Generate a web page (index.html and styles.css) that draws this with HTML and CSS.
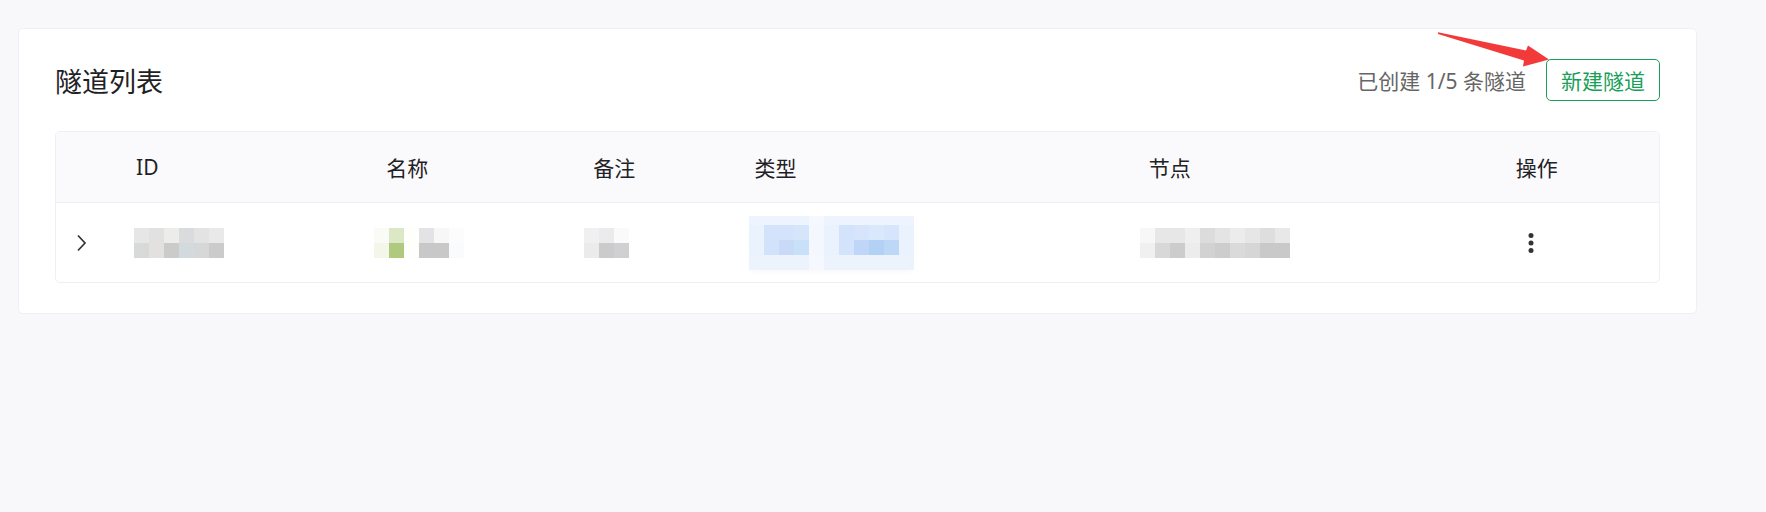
FILE: index.html
```html
<!DOCTYPE html>
<html lang="zh-CN">
<head>
    <meta charset="UTF-8">
    <meta name="viewport" content="width=device-width, initial-scale=1.0">
    <title>隧道列表</title>
    <link rel="stylesheet" href="styles.css">
</head>
<body>
    <div class="card">
        <div class="card-header">
            <h2 class="card-title">隧道列表</h2>
            <div class="card-extra">
                <span class="quota">已创建 1/5 条隧道</span>
                <button class="btn-ghost">新建隧道</button>
            </div>
        </div>

        <div class="table-wrap">
            <table class="tunnel-table">
                <colgroup>
                    <col class="c-expand">
                    <col class="c-id">
                    <col class="c-name">
                    <col class="c-remark">
                    <col class="c-type">
                    <col class="c-node">
                    <col class="c-action">
                </colgroup>
                <thead>
                    <tr>
                        <th></th>
                        <th class="th-id">ID</th>
                        <th>名称</th>
                        <th>备注</th>
                        <th>类型</th>
                        <th>节点</th>
                        <th>操作</th>
                    </tr>
                </thead>
                <tbody>
                    <tr>
                        <td>
                            <svg class="expand-icon" width="12" height="18" viewBox="0 0 12 18">
                                <path d="M3 1.5 L10 9 L3 16.5" fill="none" stroke="#333" stroke-width="1.7"/>
                            </svg>
                        </td>
                        <td><div class="mosaic mosaic-id"></div></td>
                        <td><div class="mosaic mosaic-name"></div></td>
                        <td><div class="mosaic mosaic-remark"></div></td>
                        <td><div class="mosaic-type"></div></td>
                        <td><div class="mosaic mosaic-node"></div></td>
                        <td>
                            <span class="more-btn">
                                <svg width="30" height="24" viewBox="0 0 30 24">
                                    <circle cx="15" cy="4.5" r="2.5" fill="#333"/>
                                    <circle cx="15" cy="12" r="2.5" fill="#333"/>
                                    <circle cx="15" cy="19.5" r="2.5" fill="#333"/>
                                </svg>
                            </span>
                        </td>
                    </tr>
                </tbody>
            </table>
        </div>
    </div>

    <!-- annotation arrow pointing at the button -->
    <svg class="annotation" width="1766" height="512" viewBox="0 0 1766 512">
        <polygon points="1438,32.3 1526,50.5 1528,45.5 1549,59.5 1523,66.5 1524,60.5 1438,34" fill="#f23a3a"/>
    </svg>
</body>
</html>
```

FILE: styles.css
```css
body {
    margin: 0;
    padding: 28px 0 0 18px;
    background-color: #f8f8fa;
    font-family: "Noto Sans", "Noto Sans CJK SC", sans-serif;
    color: #1f2225;
    position: relative;
    min-height: 484px;
}

.card {
    width: 1679px;
    box-sizing: border-box;
    background-color: #fff;
    border: 1px solid #efeff5;
    border-radius: 5px;
    padding: 30px 36px 30px 36px;
}

.card-header {
    display: flex;
    justify-content: space-between;
    align-items: center;
    height: 42px;
    margin-bottom: 30px;
}

.card-title {
    margin: 0;
    font-size: 27px;
    font-weight: 400;
    color: #1f2225;
}

.card-extra {
    display: flex;
    align-items: center;
    gap: 20px;
}

.quota {
    font-size: 21px;
    color: #666;
}

.btn-ghost {
    height: 42px;
    box-sizing: border-box;
    padding: 0 14px;
    background: #fff;
    border: 1px solid #18a058;
    border-radius: 5px;
    color: #18a058;
    font-family: inherit;
    font-size: 21px;
    cursor: pointer;
}

/* table */
.table-wrap {
    border: 1px solid #efeff5;
    border-radius: 5px;
    overflow: hidden;
}

.tunnel-table {
    width: 100%;
    table-layout: fixed;
    border-collapse: separate;
    border-spacing: 0;
}

.c-expand { width: 60px; }
.c-id { width: 252px; }
.c-name { width: 207px; }
.c-remark { width: 161px; }
.c-type { width: 394px; }
.c-node { width: 367px; }
.c-action { width: 161px; }

.tunnel-table th {
    height: 70px;
    padding: 0 18px;
    background-color: #fafafc;
    border-bottom: 1px solid #efeff5;
    text-align: left;
    font-size: 21px;
    font-weight: 400;
    color: #1f2225;
}

.tunnel-table .th-id {
    padding-left: 20px;
}

.tunnel-table td {
    height: 79px;
    padding: 0 18px;
    vertical-align: middle;
}

.expand-icon {
    display: block;
    margin-left: 1px;
}

.more-btn {
    display: block;
    width: 30px;
}

.more-btn svg {
    display: block;
}

/* blurred cell content */
.mosaic {
    height: 30px;
    background-repeat: no-repeat;
    background-size: 100% 15px;
    background-position: 0 0, 0 15px;
}

.mosaic-id {
    width: 90px;
    background-image:
        linear-gradient(to right, #e6e6e6 0 15px, #e1e1e1 15px 30px, #ececea 30px 45px, #d9dbdd 45px 60px, #e2e3e2 60px 75px, #e9e9e9 75px),
        linear-gradient(to right, #d8d9d9 0 15px, #e2e1df 15px 30px, #cbcbca 30px 45px, #d3dadd 45px 60px, #d6d8d8 60px 75px, #cbcbcb 75px);
}

.mosaic-name {
    width: 90px;
    margin-left: -12px;
    background-image:
        linear-gradient(to right, #fafaf6 0 15px, #dce7c6 15px 30px, #fefefa 30px 45px, #e3e3e5 45px 60px, #f7f7f7 60px 75px, #fcfcfc 75px),
        linear-gradient(to right, #f4f6ea 0 15px, #afc97e 15px 30px, #fefefb 30px 45px, #c8c8c8 45px 60px, #c8c8c8 60px 75px, #fafbfd 75px);
}

.mosaic-remark {
    width: 45px;
    margin-left: -9px;
    background-image:
        linear-gradient(to right, #f0f0f0 0 15px, #ebebed 15px 30px, #fafafa 30px),
        linear-gradient(to right, #ebebeb 0 15px, #cbcbcb 15px 30px, #d0d0d2 30px);
}

.mosaic-type {
    width: 165px;
    height: 54px;
    margin-left: -5px;
    margin-top: 1px;
    background-repeat: no-repeat;
    background-size: 100% 9px, 100% 15px, 100% 15px, 100% 15px;
    background-position: 0 0, 0 9px, 0 24px, 0 39px;
    background-image:
        linear-gradient(to right, #eef4fd 0 60px, #f5f8fe 60px 75px, #eef4fd 75px),
        linear-gradient(to right, #eaf2fd 0 15px, #d3e3fb 15px 30px, #d3e3fb 30px 45px, #d5e6fa 45px 60px, #f4f8fe 60px 75px, #eaf2fd 75px 90px, #d3e3fb 90px 105px, #d6e5fb 105px 120px, #dae8fb 120px 135px, #d6e5fb 135px 150px, #eaf2fd 150px),
        linear-gradient(to right, #eaf2fd 0 15px, #d2e2fb 15px 30px, #c8daf8 30px 45px, #c9e0f9 45px 60px, #f4f8fe 60px 75px, #eaf2fd 75px 90px, #d3e3fb 90px 105px, #bfd6f8 105px 120px, #b3d0f5 120px 135px, #bdd7f7 135px 150px, #eaf2fd 150px),
        linear-gradient(to right, #edf3fc 0 60px, #f5f8fe 60px 75px, #edf3fc 75px);
    box-shadow: 0 5px 6px -3px rgba(0, 0, 0, 0.03);
}

.mosaic-node {
    width: 150px;
    margin-left: -9px;
    background-image:
        linear-gradient(to right, #f7f7f7 0 15px, #e7e7e7 15px 30px, #e7e7e7 30px 45px, #efefef 45px 60px, #dcdcdc 60px 75px, #e4e4e4 75px 90px, #ececec 90px 105px, #e6e6e6 105px 120px, #dedede 120px 135px, #e8e8e8 135px),
        linear-gradient(to right, #f0f0f0 0 15px, #d8d8d8 15px 30px, #cccccc 30px 45px, #ececec 45px 60px, #d2d2d2 60px 75px, #cdcdcd 75px 90px, #dadada 90px 105px, #d6d6d6 105px 120px, #c9c9c9 120px 135px, #c9c9c9 135px);
}

.annotation {
    position: absolute;
    top: 0;
    left: 0;
    pointer-events: none;
}
```
